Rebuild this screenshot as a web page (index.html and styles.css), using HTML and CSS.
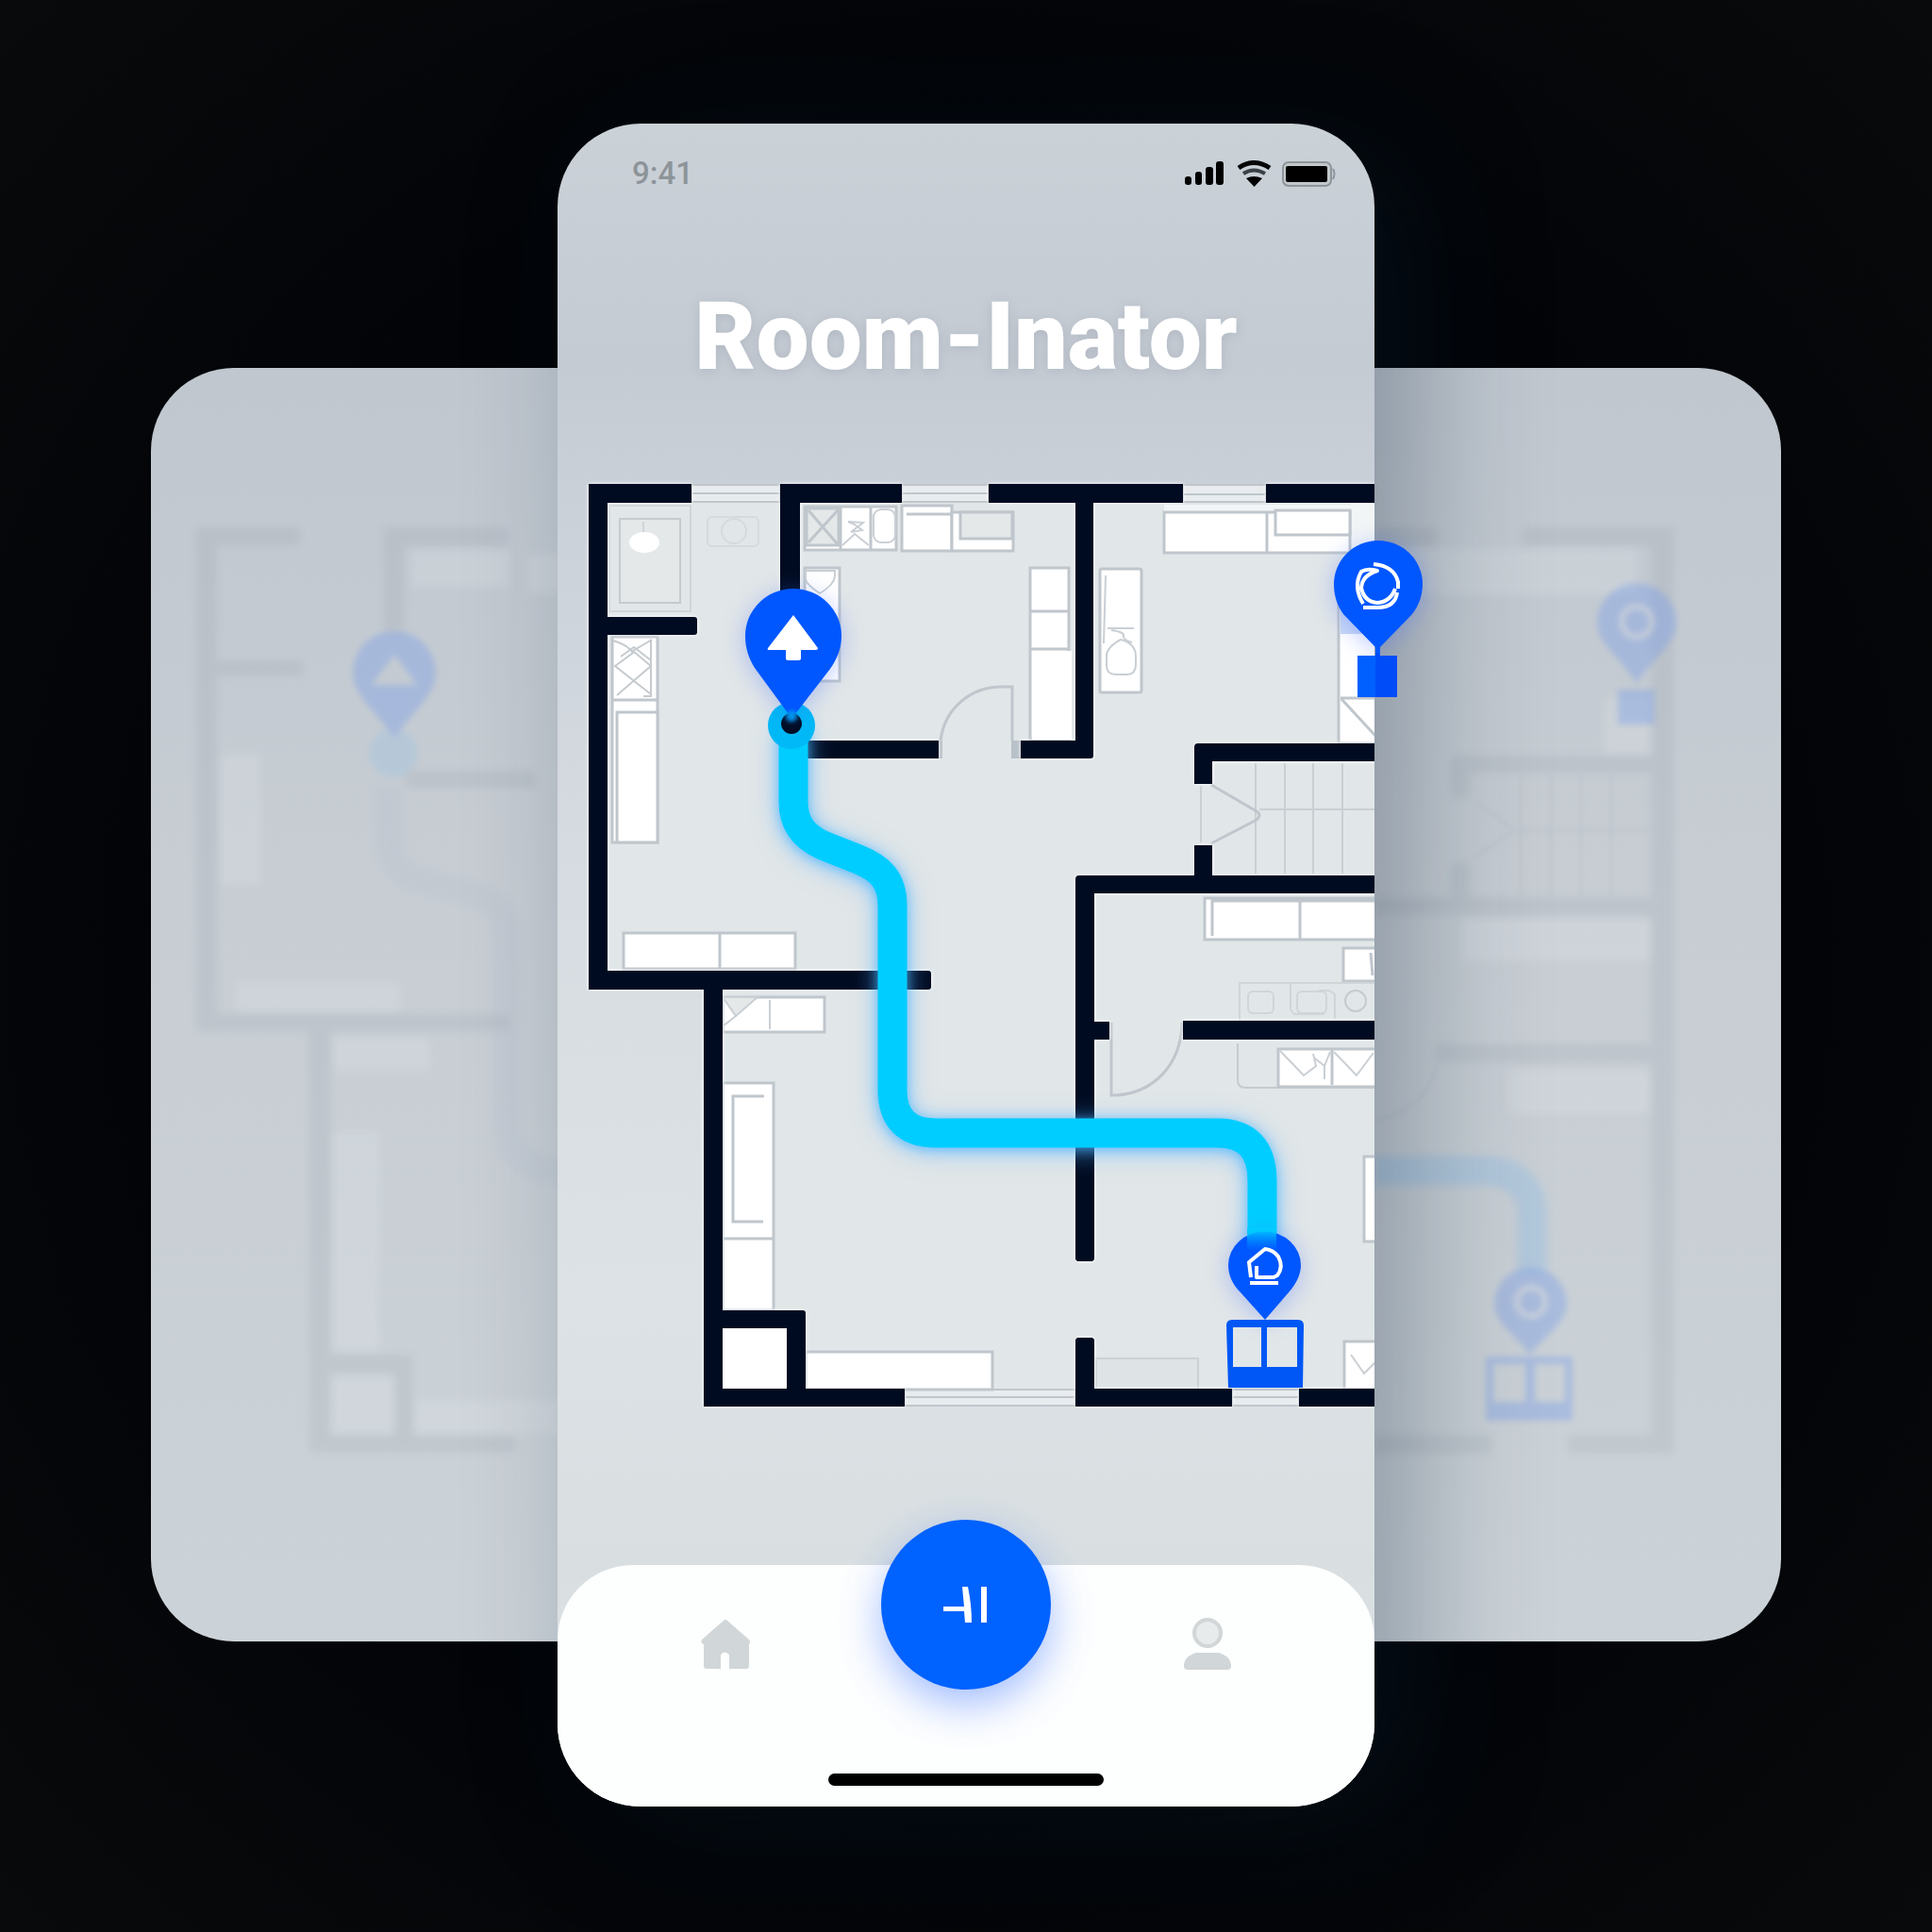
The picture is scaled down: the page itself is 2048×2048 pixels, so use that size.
FILE: index.html
```html
<!DOCTYPE html>
<html lang="en">
<head>
<meta charset="utf-8">
<meta name="viewport" content="width=device-width, initial-scale=1">
<title>Room-Inator</title>
<link rel="stylesheet" href="styles.css">
</head>
<body>
<main class="scene">
  <div class="backdrop" aria-hidden="true">
    <svg class="backdrop-plan" viewBox="160 390 1728 1350">
      <g class="ghost-walls">
        <path d="M208 559H318V578H230V700H322V716H230V1075H540V1093H350V1436H438V1540H328V1093H208ZM350 1455V1521H418V1455Z"/>
        <path d="M407 559H538V578H428V670H407Z"/>
        <path d="M430 817H567V835H430Z"/>
        <path d="M438 1521H545V1540H438Z"/>
        <path d="M1457 559H1523V578H1457ZM1614 559H1774V1541H1662V1521H1750V1126H1522V1107H1750V970H1457V951H1538V914H1558V951H1750V819H1558V845H1538V801H1750V578H1614Z"/>
        <path d="M1457 1521H1581V1541H1457Z"/>
      </g>
      <g class="ghost-items">
        <path d="M234 800H276V937H234ZM250 1041H424V1072H250ZM354 1100H455V1134H354ZM354 1200H402V1432H354ZM352 1460H418V1520H352ZM440 1485H600V1520H440ZM437 584H540V622H437ZM560 588H600V628H560Z"/>
        <path d="M1457 582H1735V630H1457ZM1550 975H1750V1018H1550ZM1600 1134H1750V1180H1600ZM1700 740H1750V800H1700Z"/>
      </g>
      <g class="ghost-lines">
        <path d="M1564 850L1606 880L1564 908M1612 822V948M1644 822V948M1676 822V948M1708 822V948M1612 880H1748M1460 1188Q1518 1170 1522 1128"/>
      </g>
      <path class="ghost-route-left" d="M412 835V890Q412 925 450 935L510 950Q538 960 538 1000V1190Q538 1240 600 1242"/>
      <path class="ghost-route" d="M1457 1241H1570Q1624 1241 1624 1290V1350"/>
      <g class="ghost-pins">
        <circle class="ghost-ring" cx="417" cy="798" r="26"/>
        <path d="M374 713A44 44 0 0 1 462 713C462 736 440 752 418 782C396 752 374 736 374 713ZM418 694L394 726H442Z"/>
        <path d="M1693 660A42 42 0 0 1 1777 660C1777 684 1750 698 1735 725C1720 698 1693 684 1693 660ZM1715 731H1754V768H1715Z"/>
        <path d="M1584 1382A38 38 0 0 1 1661 1382C1661 1402 1638 1415 1622 1436C1606 1415 1584 1402 1584 1382ZM1575 1438H1667V1506H1575ZM1583 1446V1486H1617V1446ZM1627 1446V1486H1659V1446Z"/>
        <circle class="ghost-mark" cx="1735" cy="659" r="16"/>
        <circle class="ghost-mark" cx="1623" cy="1380" r="15"/>
      </g>
    </svg>
  </div>

  <section class="phone" aria-label="Room-Inator app">
    <header class="status">
      <time class="clock">9:41</time>
      <svg class="status-icons" width="160" height="28" viewBox="1256 170 160 28" role="img" aria-label="Signal, wifi and battery full">
        <rect x="1256" y="187" width="7" height="9" rx="3"/>
        <rect x="1267" y="182" width="7" height="14" rx="3"/>
        <rect x="1278" y="177" width="8" height="19" rx="3"/>
        <rect x="1289" y="171" width="8" height="25" rx="3"/>
        <g class="wifi">
          <path d="M1313 178Q1329 167 1346 178"/>
          <path class="wifi-mid" d="M1318 184Q1329 177 1341 184"/>
        </g>
        <path d="M1321 189Q1329 185 1338 189L1329.500 198Z"/>
        <rect class="battery-case" x="1360" y="172" width="51" height="25" rx="6"/>
        <path class="battery-tip" d="M1413 179Q1416 184 1413 190"/>
        <rect x="1363" y="176" width="44" height="17" rx="2"/>
      </svg>
    </header>

    <h1 class="title">Room-Inator</h1>

    <svg class="map" viewBox="591 501 866 1002" role="img" aria-label="Floor plan with a highlighted route">
      <defs>
        <clipPath id="screen"><rect x="591" y="501" width="866" height="1002"/></clipPath>
        <linearGradient id="fade" x1="0" y1="0" x2="0" y2="1">
          <stop offset="0" stop-color="#00cfff"/>
          <stop offset="1" stop-color="#00a0ff" stop-opacity="0"/>
        </linearGradient>
      </defs>
      <g clip-path="url(#screen)">
        <path class="floor" d="M624 513H1460V1491H746V1049H624Z"/>

        <g class="window">
          <path d="M733 514H827V532H733ZM956 514H1048V532H956ZM1254 514H1342V532H1254ZM959 1473H1140V1490H959ZM1306 1473H1377V1490H1306Z"/>
          <path d="M733 523H827M956 523H1048M1254 524H1342M959 1481H1140M1306 1481H1377"/>
        </g>

        <!-- bathroom -->
        <g class="faint">
          <path d="M646 536H732V648H646Z"/>
          <rect class="tray strong" x="657" y="550" width="64" height="89"/>
          <path d="M682 553V566"/>
          <rect class="pale" x="750" y="548" width="54" height="31" rx="5"/>
          <circle class="pale" cx="778" cy="563" r="13"/>
        </g>
        <ellipse class="solid" cx="683" cy="575" rx="16" ry="11"/>

        <!-- left bedroom -->
        <g class="item">
          <path d="M649 675H697V742H649ZM649 742H697V893H649Z"/>
          <path d="M654 755H697V893H654Z"/>
          <path d="M661 989H843V1027H661ZM763 990V1026"/>
        </g>
        <g class="faint strong">
          <path d="M650 679Q666 684 671 692L652 706L690 736M691 678L671 690L690 706L654 737M658 696L672 686L690 700M690 678V738H682"/>
        </g>

        <!-- kitchen -->
        <g class="item">
          <path d="M853 537H950V583H853ZM891 537V583M923 537V583"/>
          <path class="tray" d="M855 539H889V578H855Z"/>
          <path d="M857 541L888 577M888 541L857 575"/>
          <path class="thin" d="M899 553L915 554L902 564L914 562L906 556ZM893 578L906 566L921 578"/>
          <rect class="thin" x="926" y="540" width="23" height="35" rx="8"/>
          <path d="M956 536H1009V584H956ZM961 545H1008"/>
          <path d="M1009 543H1074V584H1009Z"/>
          <path class="tray" d="M1018 543H1073V571H1018Z"/>
          <path d="M853 602H890V722H853Z"/>
          <path class="thin" d="M854 605H885V611Q884 620 869 629Q855 620 854 614Z"/>
          <path d="M1092 602H1133V784H1092ZM1092 648H1133M1092 688H1133"/>
        </g>
        <path class="solid" d="M1094 690H1136V784H1094Z"/>

        <!-- living room -->
        <path class="glare" d="M1234 535H1459V543H1234ZM1432 534H1459V600H1432Z"/>
        <g class="item">
          <rect x="1166" y="603" width="44" height="131" rx="2"/>
          <path class="thin" d="M1172 610L1170 682M1174 666L1202 666M1178 668Q1192 670 1191 674Q1190 678 1200 681"/>
          <path class="thin" d="M1173 693Q1176 684 1188 678Q1204 682 1204 696V704Q1204 715 1194 715H1182Q1173 714 1173 706Z"/>
          <path d="M1234 543H1431V586H1234ZM1343 543V586"/>
          <path d="M1352 541H1431V567H1352Z"/>
          <path d="M1419 640H1470V788H1419ZM1421 740H1459M1422 741L1459 781"/>
        </g>
        <path class="tint" d="M1421 640H1459V672H1421Z"/>

        <!-- stairs -->
        <g class="line">
          <path class="thin" d="M1331 809V927M1362 809V927M1392 809V927M1423 809V927M1335 858H1459"/>
          <path d="M1284 832L1332 860Q1338 864 1332 869L1284 894"/>
          <path class="thin" d="M1273 833V893"/>
        </g>

        <!-- right bedrooms -->
        <g class="item">
          <path d="M1277 952H1470V996H1277ZM1285 992V955H1470M1378 956V996"/>
          <path d="M1424 1005H1470V1040H1424Z"/>
          <path class="hollow" d="M1453 1010L1455 1034"/>
        </g>
        <g class="faint">
          <path d="M1314 1042H1470V1082H1314ZM1368 1043V1070L1372 1075H1404M1398 1050H1409L1415 1054V1080"/>
          <rect x="1323" y="1051" width="27" height="23" rx="5"/>
          <rect x="1375" y="1051" width="31" height="23" rx="5"/>
          <circle class="strong" cx="1437" cy="1061" r="11"/>
          <path class="strong" d="M1312 1106V1145Q1312 1153 1320 1153H1470"/>
        </g>
        <g class="item">
          <path d="M1355 1112H1470V1152H1355ZM1412 1113V1150"/>
          <path class="thin" d="M1357 1114L1382 1140L1395 1130L1392 1117M1394 1122L1404 1130L1410 1115M1404 1128V1144M1414 1115L1438 1140L1456 1116"/>
          <path d="M1446 1226H1470V1316H1446Z"/>
          <path d="M1425 1422H1470V1473H1425Z"/>
          <path class="thin" d="M1432 1436L1446 1456L1459 1443"/>
        </g>
        <path class="nook" d="M1162 1440H1270V1473H1162Z"/>

        <!-- lower left room -->
        <g class="item">
          <path d="M766 1057H874V1094H766Z"/>
          <path class="tray thin" d="M766 1057H803L780 1077Z"/>
          <path class="thin" d="M780 1077L766 1088M816 1060V1091"/>
          <path d="M766 1148H820V1389H766ZM766 1313H820"/>
          <path class="hollow" d="M810 1162H777V1295H809"/>
          <path d="M854 1433H1052V1473H854Z"/>
        </g>
        <path class="solid" d="M766 1408H834V1472H766Z"/>

        <!-- doors -->
        <g class="line">
          <path d="M997 803V785C1001 752 1028 728 1062 728H1073V785"/>
          <path d="M1178 1084V1161H1184C1222 1158 1252 1130 1253 1084"/>
        </g>
        <path class="jamb" d="M1072 785H1082V804H1072ZM995 785H999V804H995Z"/>

        <g class="wall">
          <path d="M624 513H733V533H644V654H736Q739 654 739 657V670Q739 673 736 673H644V1029H984Q987 1029 987 1032V1046Q987 1049 984 1049H766V1389H851Q854 1389 854 1392V1472H959V1491H746V1049H624ZM766 1408V1472H834V1408Z"/>
          <path d="M827 513H956V533H848V640H827ZM850 785H995V804H850Z"/>
          <path d="M1048 513H1254V533H1159V801Q1159 804 1156 804H1082V785H1140V533H1048ZM1342 513H1460V533H1342Z"/>
          <path d="M1460 788H1270Q1266 788 1266 792V831H1285V807H1460ZM1266 896H1285V928H1460V947H1160V1083H1176V1102H1160V1335L1158 1337H1142L1140 1335V932Q1140 928 1144 928H1266ZM1254 1082H1460V1102H1254Z"/>
          <path d="M1142 1418H1158L1160 1420V1472H1306V1491H1140V1420ZM1377 1472H1460V1491H1377Z"/>
        </g>

        <path class="route" d="M841 768V850C841 876 855 888 872 896L910 911C932 920 946 932 946 960V1155Q946 1201 992 1201H1290Q1338 1201 1338 1252V1325"/>
      </g>

      <!-- start marker -->
      <circle class="start" cx="839" cy="769" r="25"/>
      <circle class="start-dot" cx="839" cy="767" r="11"/>
      <g class="pin">
        <path d="M790 674A51 50 0 0 1 892 674C892 688 887 699 880 709L846 753Q839 762 833 753L800 708C794 698 790 688 790 674Z"/>
      </g>
      <circle class="start-tip" cx="839" cy="759" r="6"/>
      <path class="arrow" d="M841 652L867 687Q867 689 865 689H849V699L847 700H835L833 699V689H815Q813 689 814 687Z"/>

      <!-- exit marker -->
      <g class="pin">
        <path d="M1302 1341A38 35 0 0 1 1379 1341C1379 1352 1373 1362 1366 1370L1341 1399L1315 1370C1307 1362 1302 1352 1302 1341Z"/>
      </g>
      <path class="route-end" d="M1322 1302H1353V1326H1322Z"/>
      <path class="glyph" d="M1326 1354L1324 1338L1341 1324Q1350 1325 1355 1332Q1361 1343 1354 1352L1350 1354H1332V1342M1325 1360H1355"/>
      <path class="gate" d="M1306 1399H1376Q1382 1399 1382 1405L1381 1471H1302L1300 1405Q1300 1399 1306 1399ZM1307 1407V1449H1337V1407ZM1343 1407V1449H1375V1407Z" fill-rule="evenodd"/>

      <!-- meeting point marker -->
      <g class="pin">
        <path d="M1414 619A47 46 0 0 1 1508 619C1508 631 1504 642 1497 651L1463 686V696H1458V686L1424 651C1417 641 1414 631 1414 619Z"/>
      </g>
      <path class="block" d="M1439 695H1481V739H1439Z"/>
      <path class="block-side" d="M1458 692H1462V695H1481V739H1458Z"/>
      <g class="glyph">
        <path d="M1456 598Q1478 600 1482 617V624"/>
        <path d="M1481 628Q1479 644 1460 644H1445"/>
        <path d="M1445 640Q1434 622 1443 606Q1449 602 1460 605Q1444 610 1443 623Q1446 638 1460 639Q1474 638 1479 624"/>
      </g>
    </svg>

    <nav class="tabbar" aria-label="Main">
      <div class="tabs">
        <button class="tab" type="button" aria-label="Home">
          <svg width="52" height="52" viewBox="744 1718 52 52">
            <path d="M772 1719Q770 1717 768 1719L745 1739Q743 1743 747 1744V1767Q747 1770 750 1770H765V1755Q769 1750 774 1755V1770H792Q795 1770 795 1767V1744Q797 1742 795 1739Z"/>
          </svg>
        </button>
        <button class="fab" type="button" aria-label="Find route">
          <svg width="48" height="40" viewBox="1001 1682 48 40">
            <path d="M1001 1704H1023L1021 1683H1027Q1031 1702 1031 1721H1024L1023 1709H1001ZM1041 1683H1047V1721H1041Z"/>
          </svg>
        </button>
        <button class="tab" type="button" aria-label="Profile">
          <svg width="52" height="58" viewBox="1254 1713 52 58">
            <circle class="head" cx="1281" cy="1730" r="14"/>
            <path d="M1269 1751H1293Q1306 1755 1306 1765Q1306 1769 1302 1769H1260Q1256 1769 1256 1765Q1256 1755 1269 1751Z"/>
          </svg>
        </button>
      </div>
      <div class="home-bar"></div>
    </nav>
  </section>
</main>
</body>
</html>
```
FILE: styles.css
```css
* {
  box-sizing: border-box;
}

body {
  margin: 0;
  min-height: 100vh;
  display: grid;
  align-items: center;
  padding-bottom: 2px;
  background: radial-gradient(circle, #020407 60%, #080a0c 100%);
  font-family: Roboto, "Liberation Sans", sans-serif;
}

svg {
  display: block;
}

.scene {
  display: grid;
  grid-template-columns: 100%;
  place-items: center;
}

.backdrop,
.phone {
  grid-area: 1 / 1;
}

.backdrop {
  width: calc(100% - 320px);
  margin-top: 84px;
  border-radius: 88px;
  overflow: hidden;
  background: linear-gradient(180deg, #c0c7cf, #c7cdd3 40%, #ccd3d8);
}

.backdrop-plan {
  width: 100%;
  height: auto;
}

.ghost-walls {
  fill: #5c6878;
  fill-rule: evenodd;
  opacity: 0.09;
  filter: blur(4px);
}

.ghost-items {
  fill: #e8eef2;
  opacity: 0.2;
  filter: blur(4px);
}

.ghost-lines {
  fill: none;
  stroke: #8f99a6;
  stroke-width: 3;
  opacity: 0.12;
  filter: blur(2px);
}

.ghost-route,
.ghost-route-left {
  fill: none;
  stroke: #8fbde6;
  stroke-width: 32;
  opacity: 0.38;
  filter: blur(4px);
}

.ghost-route-left {
  stroke: #a9b4cc;
  stroke-width: 28;
  opacity: 0.14;
}

.ghost-pins {
  fill: #7da0e8;
  fill-rule: evenodd;
  opacity: 0.42;
  filter: blur(3px);
}

.ghost-ring {
  fill: #a2c4e0;
}

.ghost-mark {
  fill: none;
  stroke: #c8d2e6;
  stroke-width: 6;
}

.phone {
  width: min(866px, 100%);
  display: flex;
  flex-direction: column;
  border-radius: 88px;
  background: linear-gradient(180deg, #cad1d7 0, #c5cbd3 14%, #ccd2da 25%, #d6dce1 45%, #dce2e5 70%, #d9dfe1 86%, #e0e6e8 100%);
  box-shadow: 44px 16px 140px rgba(10, 30, 56, 0.32);
}

.status {
  display: flex;
  justify-content: space-between;
  align-items: center;
  padding: 37px 41px 0 79px;
}

.clock {
  font-size: 33px;
  line-height: 32px;
  font-weight: 500;
  color: #8d9499;
}

.wifi {
  fill: none;
  stroke: #050708;
  stroke-width: 5;
}

.wifi-mid {
  stroke: #3b4146;
  stroke-width: 4;
}

.battery-case {
  fill: #c3c8cb;
  stroke: #8e969b;
  stroke-width: 2;
}

.battery-tip {
  fill: none;
  stroke: #8e969b;
  stroke-width: 2;
}

.title {
  margin: 97px 0 84px;
  font-size: 100px;
  line-height: 120px;
  font-weight: 900;
  text-align: center;
  color: #fff;
  text-shadow: 0 2px 12px rgba(130, 140, 155, 0.3);
}

.map {
  width: 100%;
  height: auto;
  overflow: visible;
}

.floor {
  fill: #e1e6e8;
}

.window,
.line,
.item {
  stroke: #bfc6cc;
  stroke-width: 3;
}

.window {
  fill: #e8ecee;
  stroke-width: 2;
}

.item {
  fill: #fff;
}

.line,
.hollow {
  fill: none;
}

.faint {
  fill: none;
  stroke: #d0d5d8;
  stroke-width: 2;
}

.strong {
  stroke: #c5cbcf;
}

.pale {
  stroke: #d6dadc;
}

.tray {
  fill: #e4e8e9;
}

.thin {
  stroke-width: 2;
  stroke: #c9cfd4;
}

.solid {
  fill: #fff;
}

.glare {
  fill: #f2f5f6;
}

.tint {
  fill: #c9d8f6;
}

.nook {
  fill: #dee3e5;
  stroke: #cbd0d4;
  stroke-width: 2;
}

.jamb {
  fill: #b9c1c9;
}

.wall {
  fill: #000b21;
  fill-rule: evenodd;
  filter: drop-shadow(0 0 2px #fff);
}

.route {
  fill: none;
  stroke: #00cdff;
  stroke-width: 31;
  filter: drop-shadow(0 2px 6px rgba(60, 180, 255, 0.6)) drop-shadow(0 3px 12px rgba(90, 180, 255, 0.6));
}

.route-end {
  fill: url(#fade);
}

.start {
  fill: #00b9f6;
}

.start-dot {
  fill: #000b21;
}

.start-tip {
  fill: #0096f0;
  filter: blur(2px);
}

.pin {
  fill: #0057ff;
  filter: drop-shadow(0 4px 12px rgba(70, 110, 255, 0.35));
}

.arrow {
  fill: #fff;
}

.glyph {
  fill: none;
  stroke: #fff;
  stroke-width: 4;
  stroke-linejoin: round;
}

.gate {
  fill: #0057f5;
}

.block {
  fill: #0060ff;
}

.block-side {
  fill: #004cf8;
}

.tabbar {
  margin-top: 156px;
  padding-bottom: 22px;
  border-radius: 80px 80px 88px 88px;
  background: #fdfefe;
}

.tabs {
  display: grid;
  grid-template-columns: repeat(3, minmax(0, 255px));
  justify-content: center;
  justify-items: center;
  align-items: start;
}

.tab,
.fab {
  display: grid;
  place-items: center;
  padding: 0;
  border: 0;
  background: none;
  cursor: pointer;
}

.tab {
  width: 88px;
  height: 64px;
  margin-top: 52px;
  fill: #d1d6d8;
}

.head {
  fill: #e8ebec;
  stroke: #d1d6d8;
  stroke-width: 4;
}

.fab {
  width: 180px;
  height: 180px;
  margin-top: -48px;
  border-radius: 50%;
  background: #0062ff;
  fill: #fff;
  box-shadow: 0 16px 44px rgba(40, 100, 255, 0.42);
}

.home-bar {
  width: 292px;
  height: 13px;
  margin: 89px auto 0;
  border-radius: 7px;
  background: #000;
}
```
